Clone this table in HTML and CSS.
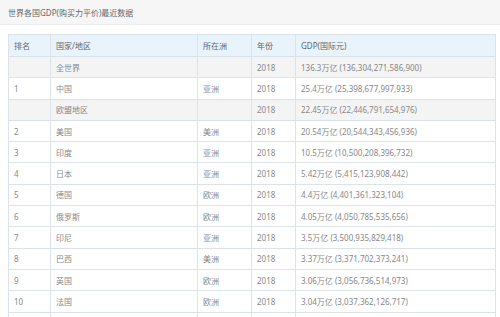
FILE: index.html
```html
<!DOCTYPE html>
<html lang="zh-CN">

<head>
    <meta charset="UTF-8">
    <meta name="viewport" content="width=device-width, initial-scale=1.0">
    <title>世界各国GDP(购买力平价)最近数据</title>
    <link rel="stylesheet" href="styles.css">
</head>

<body>
    <div class="title-bar">世界各国GDP(购买力平价)最近数据</div>

    <table class="gdp-table">
        <colgroup>
            <col class="col-rank">
            <col class="col-country">
            <col class="col-continent">
            <col class="col-year">
            <col class="col-gdp">
        </colgroup>
        <thead>
            <tr>
                <th>排名</th>
                <th>国家/地区</th>
                <th>所在洲</th>
                <th>年份</th>
                <th>GDP(国际元)</th>
            </tr>
        </thead>
        <tbody>
            <tr class="group">
                <td></td>
                <td>全世界</td>
                <td></td>
                <td>2018</td>
                <td>136.3万亿 (136,304,271,586,900)</td>
            </tr>
            <tr>
                <td>1</td>
                <td>中国</td>
                <td>亚洲</td>
                <td>2018</td>
                <td>25.4万亿 (25,398,677,997,933)</td>
            </tr>
            <tr class="group">
                <td></td>
                <td>欧盟地区</td>
                <td></td>
                <td>2018</td>
                <td>22.45万亿 (22,446,791,654,976)</td>
            </tr>
            <tr>
                <td>2</td>
                <td>美国</td>
                <td>美洲</td>
                <td>2018</td>
                <td>20.54万亿 (20,544,343,456,936)</td>
            </tr>
            <tr>
                <td>3</td>
                <td>印度</td>
                <td>亚洲</td>
                <td>2018</td>
                <td>10.5万亿 (10,500,208,396,732)</td>
            </tr>
            <tr>
                <td>4</td>
                <td>日本</td>
                <td>亚洲</td>
                <td>2018</td>
                <td>5.42万亿 (5,415,123,908,442)</td>
            </tr>
            <tr>
                <td>5</td>
                <td>德国</td>
                <td>欧洲</td>
                <td>2018</td>
                <td>4.4万亿 (4,401,361,323,104)</td>
            </tr>
            <tr>
                <td>6</td>
                <td>俄罗斯</td>
                <td>欧洲</td>
                <td>2018</td>
                <td>4.05万亿 (4,050,785,535,656)</td>
            </tr>
            <tr>
                <td>7</td>
                <td>印尼</td>
                <td>亚洲</td>
                <td>2018</td>
                <td>3.5万亿 (3,500,935,829,418)</td>
            </tr>
            <tr>
                <td>8</td>
                <td>巴西</td>
                <td>美洲</td>
                <td>2018</td>
                <td>3.37万亿 (3,371,702,373,241)</td>
            </tr>
            <tr>
                <td>9</td>
                <td>英国</td>
                <td>欧洲</td>
                <td>2018</td>
                <td>3.06万亿 (3,056,736,514,973)</td>
            </tr>
            <tr>
                <td>10</td>
                <td>法国</td>
                <td>欧洲</td>
                <td>2018</td>
                <td>3.04万亿 (3,037,362,126,717)</td>
            </tr>
            <tr>
                <td></td>
                <td></td>
                <td></td>
                <td></td>
                <td></td>
            </tr>
        </tbody>
    </table>
</body>

</html>
```

FILE: styles.css
```css
body {
    margin: 0;
    font-family: "Noto Sans", "Noto Sans CJK SC", sans-serif;
    color: #888;
    background: #fff;
}

.title-bar {
    height: 24px;
    line-height: 26px;
    padding-left: 8px;
    font-size: 8px;
    color: #666;
    background: #f6f6f6;
    border-bottom: 1px solid #ececec;
}

.gdp-table {
    margin: 9px 0 0 8px;
    width: 488px;
    border-collapse: collapse;
    table-layout: fixed;
    font-size: 8px;
}

.col-rank {
    width: 42px;
}

.col-country {
    width: 147px;
}

.col-continent {
    width: 54px;
}

.col-year {
    width: 44px;
}

.gdp-table th,
.gdp-table td {
    border: 1px solid #dbe2ea;
    padding: 0 5px;
    text-align: left;
    white-space: nowrap;
}

.gdp-table th {
    height: 21px;
    font-weight: normal;
    color: #666;
    background: #e9f3fc;
}

.gdp-table td {
    height: 20.3px;
}

.gdp-table tr.group td {
    background: #f4f4f4;
}
```
